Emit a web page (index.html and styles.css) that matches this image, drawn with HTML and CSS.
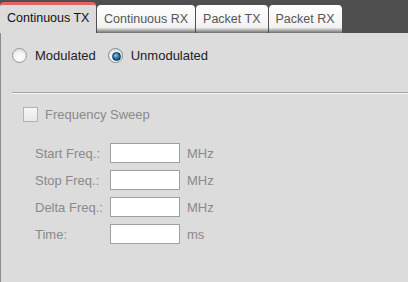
FILE: index.html
```html
<!DOCTYPE html>
<html lang="en">
<head>
  <meta charset="UTF-8">
  <title>Continuous TX</title>
  <link rel="stylesheet" href="styles.css">
</head>
<body>
  <!-- Tab strip -->
  <div class="tabs">
    <div class="tab active">Continuous TX</div>
    <div class="tab">Continuous RX</div>
    <div class="tab">Packet TX</div>
    <div class="tab">Packet RX</div>
  </div>

  <!-- Tab body -->
  <div class="panel">
    <div class="mode">
      <label class="radio"><span class="dot"></span>Modulated</label>
      <label class="radio"><span class="dot on"></span>Unmodulated</label>
    </div>

    <div class="sep"></div>

    <div class="sweep">
      <label class="check"><span class="box"></span>Frequency Sweep</label>
      <div class="fields">
        <span>Start Freq.:</span><span class="input"></span><span>MHz</span>
        <span>Stop Freq.:</span><span class="input"></span><span>MHz</span>
        <span>Delta Freq.:</span><span class="input"></span><span>MHz</span>
        <span>Time:</span><span class="input"></span><span>ms</span>
      </div>
    </div>
  </div>
</body>
</html>
```

FILE: styles.css
```css
html, body {
  margin: 0;
  padding: 0;
  height: 100%;
}
body {
  background-color: #4f4f4f;
  font-family: "Liberation Sans", Arial, sans-serif;
  font-size: 13px;
  display: flex;
  flex-direction: column;
  overflow: hidden;
}
/* Tab strip */
.tabs {
  display: flex;
  align-items: flex-end;
  height: 33px;
  flex-shrink: 0;
}
.tab {
  box-sizing: border-box;
  height: 28px;
  padding: 7px 7px 0 7px;
  margin-left: 1px;
  border-radius: 4px 4px 0 0;
  font-size: 12.5px;
  white-space: nowrap;
  color: #555;
  background: linear-gradient(to bottom, #ffffff 0%, #f2f2f2 80%, #bdbdbd 88%, #6e6e6e 100%);
}
.tab.active {
  height: 31px;
  width: 96px;
  margin-left: 0;
  padding: 6px 0 0 7px;
  color: #111;
  background: #dcdcdc;
  border-top: 3px solid #e46464;
}
/* Tab body */
.panel {
  flex: 1;
  background-color: #dcdcdc;
  border-left: 1px solid #8c8c8c;
  padding: 14px 0 0 11px;
}
.mode {
  display: flex;
  align-items: center;
  height: 16px;
  color: #222;
}
.radio {
  display: flex;
  align-items: center;
  margin-right: 12px;
}
.dot {
  box-sizing: border-box;
  width: 15px;
  height: 15px;
  margin-right: 8px;
  border-radius: 50%;
  border: 1px solid #9a9a9a;
  background: radial-gradient(circle at 50% 65%, #ffffff 0%, #f4f4f4 45%, #d0d0d0 100%);
  position: relative;
}
.dot.on {
  border-color: #7e8a94;
}
.dot.on::after {
  content: "";
  position: absolute;
  left: 3px;
  top: 3px;
  width: 7px;
  height: 7px;
  border-radius: 50%;
  border: 0.5px solid #0b2a48;
  background: radial-gradient(circle at 40% 35%, #8fd0f4 0%, #2a7fb8 40%, #0c3a66 100%);
}
/* Groove separator */
.sep {
  margin-top: 29px;
  height: 1px;
  background: #a2a2a2;
  border-bottom: 1px solid #f8f8f8;
}
.sweep {
  padding: 12px 0 0 11px;
  color: #8a8a8a;
}
.check {
  display: flex;
  align-items: center;
  height: 16px;
}
.box {
  box-sizing: border-box;
  width: 15px;
  height: 15px;
  margin-right: 7px;
  border: 1px solid #b4b4b4;
  background: linear-gradient(to bottom, #f6f6f6, #e8e8e8);
}
.fields {
  display: grid;
  grid-template-columns: 68px 70px auto;
  grid-auto-rows: 20px;
  row-gap: 7px;
  column-gap: 7px;
  align-items: center;
  margin: 21px 0 0 12px;
}
.input {
  box-sizing: border-box;
  height: 20px;
  background: #fff;
  border: 1px solid #a0a0a0;
}
```
